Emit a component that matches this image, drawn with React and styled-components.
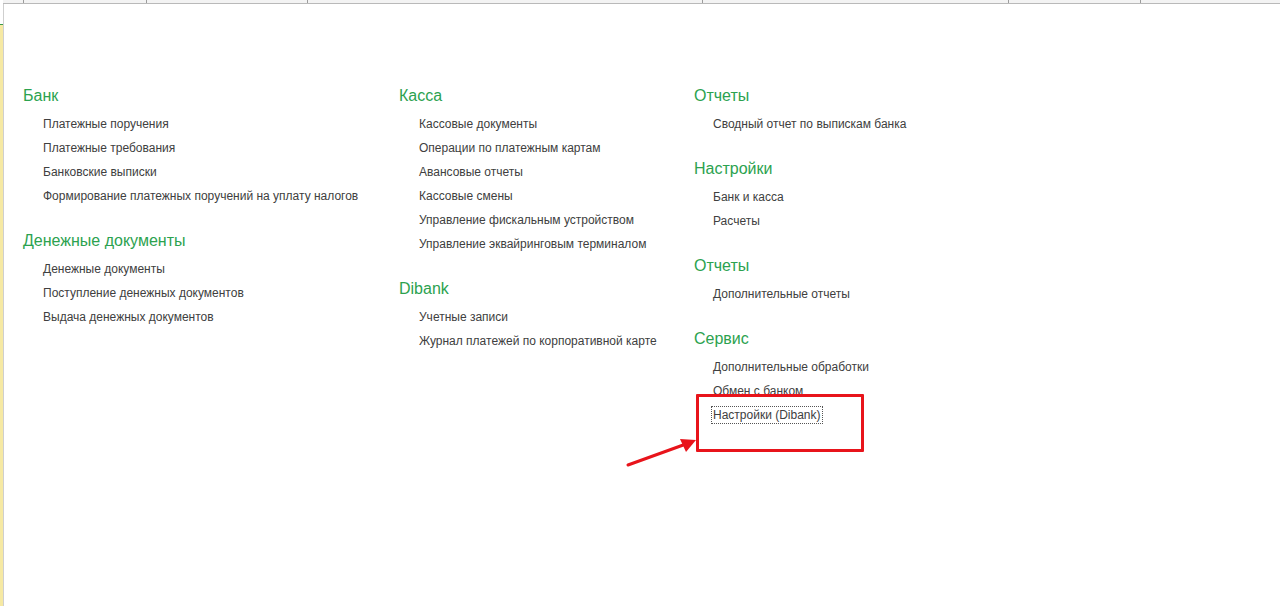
import React from "react";
import styled, { createGlobalStyle } from "styled-components";

const Global = createGlobalStyle`
  html, body { margin: 0; padding: 0; background: #fff; }
  body { font-family: "Liberation Sans", Arial, sans-serif; }
`;

const Page = styled.div`
  position: relative;
  display: flex;
  width: 1280px;
  height: 606px;
  overflow: hidden;
  background: #fff;
`;

const SideStrip = styled.div`
  width: 3px;
  flex: none;
  display: flex;
  flex-direction: column;
`;

const StripGap = styled.div`
  height: 24px;
  background: #fff;
`;

const StripLine = styled.div`
  height: 1px;
  background: #3a9a4c;
`;

const StripFill = styled.div`
  flex: 1;
  background: #f6e9a3;
`;

const Main = styled.div`
  flex: 1;
  display: flex;
  flex-direction: column;
`;

const TopBar = styled.div`
  display: flex;
  height: 3px;
  background: #f3f3f3;
  border-bottom: 1px solid #b9b9b9;
`;

const TopCell = styled.div`
  width: ${(p) => p.$w}px;
  flex: ${(p) => (p.$grow ? 1 : "none")};
  border-right: ${(p) => (p.$grow ? "none" : "1px solid #9c9c9c")};
  box-sizing: border-box;
`;

const Body = styled.div`
  flex: 1;
  display: flex;
  border-left: 1px solid #cfcfcf;
`;

const Grid = styled.div`
  display: grid;
  grid-template-columns: 376px 295px 1fr;
  padding: 82px 0 0 19px;
  align-items: start;
`;

const Column = styled.div`
  display: flex;
  flex-direction: column;
  gap: 23px;
`;

const Section = styled.div`
  display: flex;
  flex-direction: column;
`;

const Header = styled.div`
  font-size: 16px;
  line-height: 20px;
  height: 20px;
  color: #2ca24f;
  margin-bottom: 6px;
  white-space: nowrap;
`;

const Item = styled.div`
  font-size: 12px;
  line-height: 24px;
  height: 24px;
  color: #404040;
  padding-left: ${(p) => p.$indent || 20}px;
  white-space: nowrap;
`;

const Focused = styled.span`
  outline: 1px dotted #555;
  padding: 1px 1px 1px 1px;
  margin-left: -1px;
`;

const RedFrame = styled.div`
  position: absolute;
  left: 696px;
  top: 394px;
  width: 168px;
  height: 58px;
  box-sizing: border-box;
  border: 3px solid #e8141b;
  border-radius: 1px;
  pointer-events: none;
`;

const Arrow = styled.svg`
  position: absolute;
  left: 620px;
  top: 430px;
  pointer-events: none;
`;

const columns = [
  {
    indent: 20,
    sections: [
      {
        title: "Банк",
        items: [
          "Платежные поручения",
          "Платежные требования",
          "Банковские выписки",
          "Формирование платежных поручений на уплату налогов",
        ],
      },
      {
        title: "Денежные документы",
        items: [
          "Денежные документы",
          "Поступление денежных документов",
          "Выдача денежных документов",
        ],
      },
    ],
  },
  {
    indent: 20,
    sections: [
      {
        title: "Касса",
        items: [
          "Кассовые документы",
          "Операции по платежным картам",
          "Авансовые отчеты",
          "Кассовые смены",
          "Управление фискальным устройством",
          "Управление эквайринговым терминалом",
        ],
      },
      {
        title: "Dibank",
        items: ["Учетные записи", "Журнал платежей по корпоративной карте"],
      },
    ],
  },
  {
    indent: 19,
    sections: [
      { title: "Отчеты", items: ["Сводный отчет по выпискам банка"] },
      { title: "Настройки", items: ["Банк и касса", "Расчеты"] },
      { title: "Отчеты", items: ["Дополнительные отчеты"] },
      {
        title: "Сервис",
        items: [
          "Дополнительные обработки",
          "Обмен с банком",
          { text: "Настройки (Dibank)", focused: true },
        ],
      },
    ],
  },
];

const topCells = [21, 123, 161, 395, 306, 132];

export default function App() {
  return (
    <>
      <Global />
      <Page>
        <SideStrip>
          <StripGap />
          <StripLine />
          <StripFill />
        </SideStrip>
        <Main>
          <TopBar>
            {topCells.map((w, i) => (
              <TopCell key={i} $w={w} />
            ))}
            <TopCell $grow />
          </TopBar>
          <Body>
            <Grid>
              {columns.map((col, ci) => (
                <Column key={ci}>
                  {col.sections.map((sec, si) => (
                    <Section key={si}>
                      <Header>{sec.title}</Header>
                      {sec.items.map((it, ii) =>
                        typeof it === "string" ? (
                          <Item key={ii} $indent={col.indent}>{it}</Item>
                        ) : (
                          <Item key={ii} $indent={col.indent}>
                            <Focused>{it.text}</Focused>
                          </Item>
                        )
                      )}
                    </Section>
                  ))}
                </Column>
              ))}
            </Grid>
          </Body>
        </Main>
        <RedFrame />
        <Arrow width="90" height="45" viewBox="0 0 90 45">
          <line x1="8" y1="35" x2="66" y2="14" stroke="#e8141b" strokeWidth="3" strokeLinecap="round" />
          <polygon points="76,10 60,9 66,22" fill="#e8141b" />
        </Arrow>
      </Page>
    </>
  );
}
